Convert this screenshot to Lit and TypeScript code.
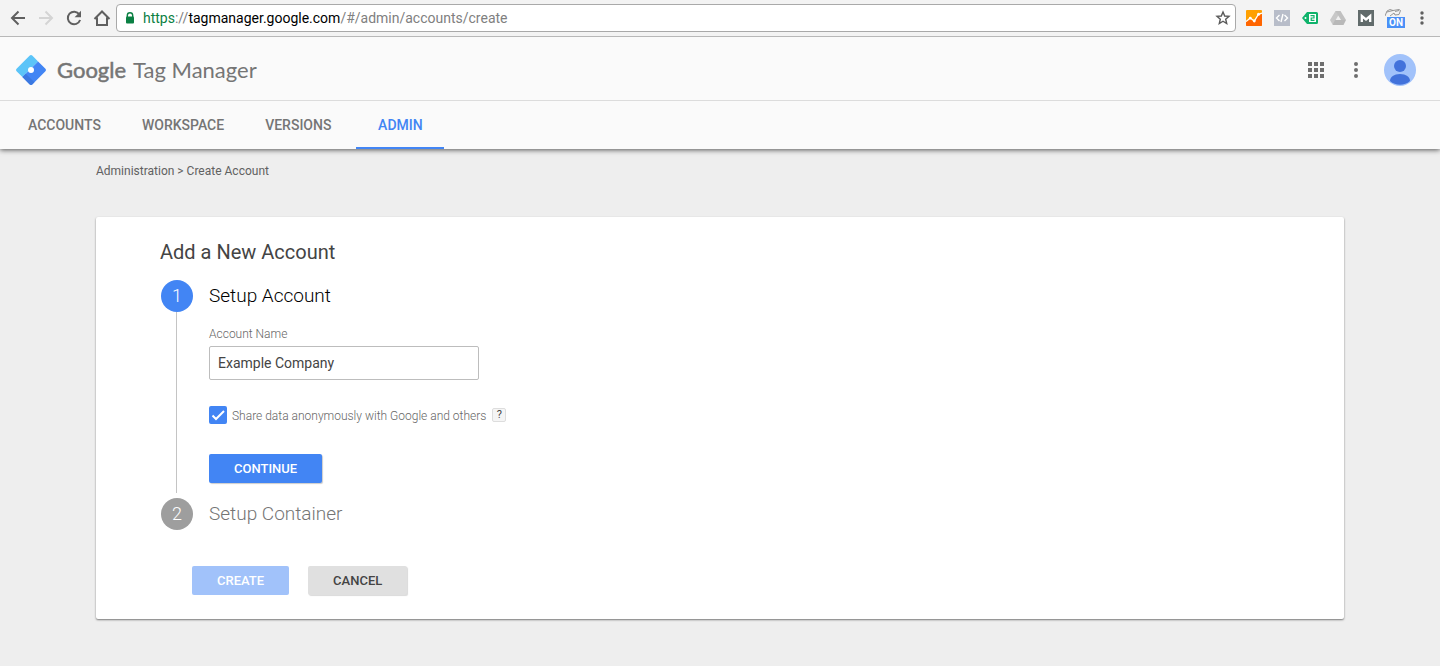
import { LitElement, html, css, svg } from "lit";
import { customElement, property, state } from "lit/decorators.js";
import { classMap } from "lit/directives/class-map.js";

@customElement("browser-bar")
class BrowserBar extends LitElement {
  static styles = css`
    :host {
      display: flex;
      align-items: center;
      height: 36px;
      background: #f3f3f3;
      border-bottom: 1px solid #b8b8b8;
      padding: 0 6px 0 4px;
    }
    button {
      display: grid;
      place-items: center;
      width: 28px;
      height: 28px;
      padding: 0;
      border: 0;
      background: none;
    }
    svg {
      display: block;
    }
    .address {
      flex: 1;
      display: flex;
      align-items: center;
      box-sizing: border-box;
      height: 28px;
      padding-left: 8px;
      background: #fff;
      border: 1px solid #a9a9a9;
      border-radius: 4px;
    }
    .url {
      flex: 1;
      margin-left: 8px;
      font: 14px/20px Roboto, sans-serif;
      color: #808080;
      white-space: nowrap;
    }
    .secure {
      color: #0b8043;
    }
    .host {
      color: #000;
    }
    .address button {
      width: 24px;
    }
    .extensions {
      display: flex;
      margin-left: 4px;
    }
    .extensions .badged {
      width: 30px;
    }
    .menu {
      width: 24px;
    }
  `;

  render() {
    return html`
      <button aria-label="Back">
        <svg width="16" height="16" viewBox="0 0 16 16" fill="none" stroke="#5f5f5f" stroke-width="2">
          <path d="M15 8H2.500M8.500 1.500L2 8l6.500 6.500" />
        </svg>
      </button>
      <button aria-label="Forward" disabled>
        <svg width="16" height="16" viewBox="0 0 16 16" fill="none" stroke="#d4d4d4" stroke-width="2">
          <path d="M1 8h12.500M7.500 1.500L14 8l-6.500 6.500" />
        </svg>
      </button>
      <button aria-label="Reload">
        <svg width="16" height="16" viewBox="0 0 16 16">
          <path d="M13.300 4.300A6.300 6.300 0 1 0 14.100 10" fill="none" stroke="#5f5f5f" stroke-width="2" />
          <path d="M15 .8v6.400H8.600z" fill="#5f5f5f" />
        </svg>
      </button>
      <button aria-label="Home">
        <svg width="18" height="16" viewBox="0 0 18 16" fill="none" stroke="#5f5f5f" stroke-width="2">
          <path d="M1.500 9L9 1.500 16.500 9M4 7.500V15h10V7.500" />
        </svg>
      </button>
      <div class="address" role="group" aria-label="Address">
        <svg width="10" height="12" viewBox="0 0 10 12">
          <path d="M2.300 5V3.500a2.700 2.700 0 0 1 5.400 0V5" fill="none" stroke="#0b8043" stroke-width="1.400" />
          <rect x="1" y="4.500" width="8" height="7" rx="1" fill="#0b8043" />
        </svg>
        <span class="url"><span class="secure">https</span>://<span class="host">tagmanager.google.com</span>/#/admin/accounts/create</span>
        <button aria-label="Bookmark">
          <svg width="16" height="16" viewBox="0 0 16 16" fill="none" stroke="#5a5a5a" stroke-width="1.400">
            <path d="M8 2l1.700 4 4.300.4-3.300 2.800 1 4.300L8 11.200l-3.700 2.300 1-4.300L2 6.400 6.300 6z" />
          </svg>
        </button>
      </div>
      <div class="extensions">
        <button aria-label="Analytics">
          <svg width="16" height="16" viewBox="0 0 16 16">
            <rect width="16" height="16" rx="1" fill="#ffa000" />
            <path d="M0 12l4-3 4 3 5-7 3-1v11a1 1 0 0 1-1 1H1a1 1 0 0 1-1-1z" fill="#ff6500" />
            <path d="M0 11.500L4.300 8l4 3 4-6.500L16 3" fill="none" stroke="#fff" stroke-width="1.300" />
            <circle cx="4.300" cy="8.200" r="1.400" fill="#fff" /><circle cx="8.300" cy="11" r="1.400" fill="#fff" />
            <circle cx="12.500" cy="4.300" r="1.500" fill="#fff" />
          </svg>
        </button>
        <button aria-label="Code">
          <svg width="16" height="16" viewBox="0 0 16 16">
            <rect width="16" height="16" fill="#b8bdc9" />
            <path d="M5.500 5L2.500 8l3 3M10.500 5l3 3-3 3M9 4l-2 8" fill="none" stroke="#fff" stroke-width="1.400" />
          </svg>
        </button>
        <button aria-label="Tag assistant">
          <svg width="16" height="16" viewBox="0 0 16 16">
            <path d="M0 8L5 2h9.500A1.500 1.500 0 0 1 16 3.500v9a1.500 1.500 0 0 1-1.500 1.500H5z" fill="#0fb36b" />
            <rect x="7" y="4" width="7" height="8" fill="#fff" />
            <circle cx="3.500" cy="8" r="1" fill="#fff" />
            <path d="M8.500 5.700h3.500v2.300H9.200v2.300h3.300" fill="none" stroke="#0fb36b" stroke-width="1.200" />
          </svg>
        </button>
        <button aria-label="Drive">
          <svg width="16" height="16" viewBox="0 0 16 16">
            <path d="M5.500 1h5L5 14.500H2.500L0 10z" fill="#c8c8c8" />
            <path d="M5.500 1h5L16 10h-5z" fill="#c0c0c0" />
            <path d="M5 10h11l-2.500 5h-11z" fill="#b8b8b8" />
            <path d="M8 6l2.300 4H5.700z" fill="#f0f0f0" />
          </svg>
        </button>
        <button aria-label="Mail extension">
          <svg width="16" height="16" viewBox="0 0 16 16">
            <rect width="16" height="16" fill="#616b6b" />
            <path d="M3.800 12V6L8 9.500 12.200 6v6" fill="none" stroke="#fff" stroke-width="2.300" />
          </svg>
        </button>
        <button class="badged" aria-label="Debugger on">
          <svg width="20" height="20" viewBox="0 0 20 20">
            <path d="M0 8l2-5 3-1.500 3 1 6-1 1.500 1-1.500 4-4 .5L9 5 5 8M2 4l6-1.500M10 3.500l4-1" fill="none" stroke="#8b8b8b" stroke-width=".9" />
            <rect x="2" y="9" width="18" height="11" fill="#4a90f7" />
            <text x="11" y="18" text-anchor="middle" font-family="Roboto, sans-serif" font-size="10" font-weight="700" fill="#fff">ON</text>
          </svg>
        </button>
      </div>
      <button class="menu" aria-label="Browser menu">
        <svg width="4" height="14" viewBox="0 0 4 14" fill="#5f5f5f">
          <circle cx="2" cy="2" r="1.700" /><circle cx="2" cy="7" r="1.700" /><circle cx="2" cy="12" r="1.700" />
        </svg>
      </button>
    `;
  }
}

@customElement("gtm-header")
class GtmHeader extends LitElement {
  @property() active = "ADMIN";

  static styles = css`
    :host {
      display: block;
      position: relative;
      background: #fafafa;
      box-shadow: 0 1px 5px rgba(0, 0, 0, 0.65);
      clip-path: inset(0 0 -12px 0);
      font-family: Roboto, sans-serif;
      color: #757575;
    }
    .top {
      display: flex;
      align-items: center;
      height: 63px;
      padding: 0 24px 0 16px;
      border-bottom: 1px solid #dcdcdc;
    }
    svg {
      display: block;
    }
    .brand {
      flex: 1;
      display: flex;
      align-items: center;
      gap: 11px;
      padding-top: 2px;
      font: 22px/32px Lato, sans-serif;
      white-space: nowrap;
    }
    .google {
      margin-right: 2px;
      -webkit-text-stroke: 0.5px #757575;
    }
    .actions {
      display: flex;
      align-items: center;
      gap: 8px;
      padding-top: 2px;
    }
    button {
      display: grid;
      place-items: center;
      width: 32px;
      height: 32px;
      padding: 0;
      border: 0;
      background: none;
    }
    .avatar {
      margin-left: 4px;
    }
    nav {
      display: flex;
      gap: 9px;
      height: 48px;
      padding-left: 12px;
    }
    .tab {
      box-sizing: border-box;
      min-width: 88px;
      padding: 2px 16px 0;
      border-bottom: 2px solid transparent;
      text-align: center;
      font-size: 14px;
      line-height: 44px;
      font-weight: 500;
      color: #757575;
      text-decoration: none;
    }
    .active {
      color: #4285f4;
      border-color: #4285f4;
    }
  `;

  render() {
    return html`
      <div class="top">
        <div class="brand">
          <svg width="30" height="30" viewBox="0 0 30 30">
            <path d="M13.500.8a2.100 2.100 0 0 1 3 0l5.600 5.600L6.400 22.100.8 16.500a2.100 2.100 0 0 1 0-3z" fill="#5bc4f8" />
            <path d="M22.100 6.400l7.100 7.100a2.100 2.100 0 0 1 0 3L16.500 29.200a2.100 2.100 0 0 1-3 0L6.400 22.100z" fill="#4285f4" />
            <path d="M9.800 18.700L18.400 27.300l-1.900 1.900a2.100 2.100 0 0 1-3 0L6.400 22.100z" fill="#3b78e0" />
            <circle cx="15" cy="15" r="3" fill="#fff" />
          </svg>
          <span><span class="google">Google</span> Tag Manager</span>
        </div>
        <div class="actions">
          <button aria-label="Apps">
            <svg width="16" height="16" viewBox="0 0 16 16" fill="#6e6e6e">
              ${[0, 6, 12].map((y) => [0, 6, 12].map((x) => svg`<rect x=${x} y=${y} width="4" height="4" />`))}
            </svg>
          </button>
          <button aria-label="More options">
            <svg width="4" height="16" viewBox="0 0 4 16" fill="#6e6e6e">
              <circle cx="2" cy="2" r="2" /><circle cx="2" cy="8" r="2" /><circle cx="2" cy="14" r="2" />
            </svg>
          </button>
          <button class="avatar" aria-label="User profile">
            <svg width="32" height="32" viewBox="0 0 32 32">
              <circle cx="16" cy="16" r="16" fill="#a1c2fa" />
              <circle cx="16" cy="12" r="6" fill="#4272db" />
              <path d="M6 27c0-4 4-7 10-7s10 3 10 7a15 15 0 0 1-20 0z" fill="#4272db" />
            </svg>
          </button>
        </div>
      </div>
      <nav>
        ${["ACCOUNTS", "WORKSPACE", "VERSIONS", "ADMIN"].map(
          (t) => html`<a href="#" class=${classMap({ tab: true, active: t === this.active })}>${t}</a>`
        )}
      </nav>
    `;
  }
}

@customElement("account-form")
class AccountForm extends LitElement {
  @state() share = true;

  static styles = css`
    :host {
      display: block;
      background: #fff;
      border-radius: 2px;
      box-shadow: 0 1px 2px rgba(0, 0, 0, 0.5);
      padding: 20px 64px 24px;
      font-family: Roboto, sans-serif;
    }
    h1 {
      margin: 0 0 12px;
      font-size: 20px;
      line-height: 31px;
      font-weight: 400;
      color: #444;
    }
    .step {
      display: flex;
      gap: 16px;
      padding-left: 1px;
    }
    .rail {
      display: flex;
      flex-direction: column;
      align-items: center;
      width: 32px;
    }
    .number {
      width: 32px;
      border-radius: 50%;
      background: #4285f4;
      color: #fff;
      text-align: center;
      font-size: 18px;
      line-height: 32px;
      font-weight: 300;
    }
    .line {
      flex: 1;
      width: 1px;
      margin: 0 1px 5px 0;
      background: #c4c4c4;
    }
    h2 {
      margin: 0;
      font-size: 19px;
      line-height: 32px;
      font-weight: 300;
      color: #000;
    }
    .pending .number {
      background: #9e9e9e;
    }
    .pending h2 {
      color: #757575;
    }
    .body {
      flex: 1;
      padding-bottom: 15px;
    }
    .label {
      display: block;
      margin: 14px 0 4px;
      font-size: 12px;
      line-height: 16px;
      font-weight: 300;
      color: #666;
    }
    .name {
      display: block;
      box-sizing: border-box;
      width: 270px;
      max-width: 100%;
      height: 34px;
      padding: 0 8px;
      border: 1px solid #bdbdbd;
      border-radius: 2px;
      font: 14px/20px Roboto, sans-serif;
      color: #444;
      outline: none;
    }
    .share {
      display: flex;
      align-items: center;
      margin: 26px 0 30px;
      font-size: 12px;
      line-height: 18px;
      font-weight: 300;
      color: #666;
    }
    .share label {
      display: flex;
      align-items: center;
      gap: 5px;
    }
    .text {
      padding-top: 2px;
      line-height: 16px;
    }
    .box {
      display: grid;
    }
    .box > * {
      grid-area: 1 / 1;
    }
    .box input {
      appearance: none;
      width: 18px;
      height: 18px;
      margin: 0;
      border: 2px solid #757575;
      border-radius: 2px;
    }
    .box input:checked {
      background: #4285f4;
      border-color: #4285f4;
    }
    .box svg {
      pointer-events: none;
    }
    button {
      padding: 0 25px;
      border: 0;
      border-radius: 2px;
      font: 500 13px/29px Roboto, sans-serif;
    }
    .help {
      width: 14px;
      margin-left: 6px;
      padding: 0;
      border: 1px solid #ddd;
      background: #f5f5f5;
      color: #444;
      font: 11px/12px Roboto, sans-serif;
    }
    .primary {
      background: #4285f4;
      color: #fff;
      box-shadow: 1px 1px 1px rgba(0, 0, 0, 0.2);
    }
    .primary:disabled {
      background: #a1c2fa;
      box-shadow: none;
    }
    .secondary {
      background: #e0e0e0;
      color: #444;
      box-shadow: 1px 1px 1px rgba(0, 0, 0, 0.15);
    }
    .footer {
      display: flex;
      gap: 19px;
      margin-top: 36px;
      padding-left: 32px;
    }
  `;

  render() {
    return html`
      <h1>Add a New Account</h1>
      <section class="step">
        <div class="rail">
          <span class="number">1</span>
          <span class="line"></span>
        </div>
        <div class="body">
          <h2>Setup Account</h2>
          <label class="label" for="name">Account Name</label>
          <input class="name" id="name" type="text" value="Example Company" />
          <div class="share">
            <label>
              <span class="box">
                <input
                  type="checkbox"
                  .checked=${this.share}
                  @change=${(e: Event) => (this.share = (e.target as HTMLInputElement).checked)}
                />
                <svg width="18" height="18" viewBox="0 0 18 18" fill="none" stroke="#fff" stroke-width="2">
                  <path d="M3.500 9.500L7 13l8-8" />
                </svg>
              </span>
              <span class="text">Share data anonymously with Google and others</span>
            </label>
            <button class="help" aria-label="Help">?</button>
          </div>
          <button class="primary">CONTINUE</button>
        </div>
      </section>
      <section class="step pending">
        <div class="rail"><span class="number">2</span></div>
        <h2>Setup Container</h2>
      </section>
      <div class="footer">
        <button class="primary" disabled>CREATE</button>
        <button class="secondary">CANCEL</button>
      </div>
    `;
  }
}

@customElement("app-root")
class AppRoot extends LitElement {
  static styles = css`
    :host {
      display: block;
      min-height: 100vh;
      background: #eee;
      font-family: Roboto, sans-serif;
    }
    main {
      padding: 12px 96px 46px;
    }
    .crumbs {
      margin-bottom: 36px;
      font-size: 12px;
      line-height: 20px;
      color: #616161;
    }
  `;

  render() {
    return html`
      <browser-bar></browser-bar>
      <gtm-header></gtm-header>
      <main>
        <div class="crumbs">Administration &gt; Create Account</div>
        <account-form></account-form>
      </main>
    `;
  }
}
